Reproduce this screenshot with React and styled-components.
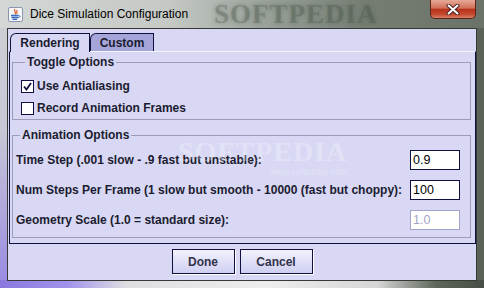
import React from 'react';
import styled, { createGlobalStyle } from 'styled-components';

const GlobalStyle = createGlobalStyle`
  html, body {
    margin: 0;
    padding: 0;
    background: #fff;
  }
  body {
    font-family: 'Liberation Sans', Arial, sans-serif;
  }
`;

const Window = styled.div`
  width: 484px;
  height: 288px;
  box-sizing: border-box;
  display: flex;
  flex-direction: column;
  background:
    linear-gradient(90deg, #8a78de 0%, #a292ea 14%, #dedee2 26%, #ededed 55%, #d6d6d6 78%, #5e665a 90%, #474e45 100%) bottom / 100% 8px no-repeat,
    linear-gradient(180deg, #cdd1d4 0%, #c6c6d6 45%, #9a88e2 100%) left / 7px 100% no-repeat,
    linear-gradient(90deg, #c9cdd0 0%, #b4b9b4 40%, #7f877d 60%, #5a6258 100%);
`;

const TitleBar = styled.div`
  height: 28px;
  flex: none;
  display: flex;
  align-items: center;
  padding-left: 8px;
  background: linear-gradient(90deg, #d3d7d5 0%, #c5c9c5 35%, #9aa29a 55%, #767e74 75%, #6b7369 100%);
`;

const TitleText = styled.span`
  margin-left: 7px;
  font-family: 'Liberation Sans', Arial, sans-serif;
  font-size: 12px;
  color: #000;
  white-space: nowrap;
`;

const Watermark = styled.span`
  margin-left: 26px;
  font-family: 'Liberation Serif', 'Times New Roman', serif;
  font-weight: bold;
  font-size: 27px;
  line-height: 28px;
  letter-spacing: 1px;
  color: rgba(72, 84, 72, 0.3);
  text-shadow: 0 0 4px rgba(72, 84, 72, 0.45);
  white-space: nowrap;
`;

const CloseButton = styled.div`
  margin-left: auto;
  margin-right: 8px;
  align-self: flex-start;
  width: 46px;
  height: 19px;
  box-sizing: border-box;
  border: 1px solid #5a2418;
  border-top: none;
  border-radius: 0 0 5px 5px;
  background: linear-gradient(180deg, #e6a896 0%, #d0705a 45%, #b8321a 52%, #c44a30 80%, #d88068 100%);
  display: flex;
  align-items: center;
  justify-content: center;
`;

const Body = styled.div`
  flex: 1;
  display: flex;
  padding: 0 7px 7px 7px;
  min-height: 0;
`;

const Client = styled.div`
  flex: 1;
  display: flex;
  flex-direction: column;
  border: 1px solid #363a36;
  background: #d8d8f4;
  padding-top: 4px;
`;

const TabRow = styled.div`
  display: flex;
  padding-left: 2px;
  height: 18px;
  position: relative;
  z-index: 1;
`;

const Tab = styled.div`
  width: ${({ $w }) => $w}px;
  height: ${({ $active }) => ($active ? 19 : 18)}px;
  box-sizing: border-box;
  border: 1px solid #101040;
  border-bottom: none;
  border-top-left-radius: 6px;
  background: ${({ $active }) => ($active ? '#d8d8f4' : '#a5a5d9')};
  font-weight: bold;
  font-size: 12px;
  color: #1c1c30;
  display: flex;
  align-items: center;
  justify-content: center;
  padding-bottom: ${({ $active }) => ($active ? 1 : 0)}px;
`;

const Pane = styled.div`
  position: relative;
  margin-left: 1px;
  border: 1px solid #101040;
  border-top-color: #f4f4ff;
  padding: 3px 4px 5px 2px;
`;

const Group = styled.fieldset`
  margin: ${({ $top }) => $top}px 0 0 0;
  padding: ${({ $pad }) => $pad};
  border: 1px solid #9c9cb8;
  min-width: 0;
`;

const Legend = styled.legend`
  margin-left: 4px;
  padding: 0 2px;
  font-weight: bold;
  font-size: 12px;
  line-height: 14px;
  color: #1c1c30;
`;

const CheckRow = styled.label`
  height: 22px;
  display: flex;
  align-items: center;
  gap: 3px;
  font-weight: bold;
  font-size: 12px;
  color: #1c1c30;
`;

const Box = styled.span`
  width: 13px;
  height: 13px;
  box-sizing: border-box;
  border: 1px solid #101040;
  background: #fff;
  display: flex;
  align-items: center;
  justify-content: center;
`;

const FieldRow = styled.div`
  height: 30px;
  display: flex;
  align-items: center;
  justify-content: space-between;
  font-weight: bold;
  font-size: 12px;
  color: #1c1c30;
`;

const Field = styled.input`
  width: 50px;
  height: 20px;
  box-sizing: border-box;
  margin: 0;
  border: 1px solid ${({ disabled }) => (disabled ? '#a4a4cc' : '#101040')};
  background: #fff;
  padding: 0 2px;
  font-family: 'Liberation Sans', Arial, sans-serif;
  font-size: 12.5px;
  color: ${({ disabled }) => (disabled ? '#a4a4c4' : '#000')};
  outline: none;
`;

const ButtonBar = styled.div`
  display: flex;
  justify-content: center;
  gap: 5px;
  padding-top: 5px;
`;

const Button = styled.button`
  width: ${({ $w }) => $w}px;
  height: 25px;
  box-sizing: border-box;
  margin: 0;
  border: 1px solid #101040;
  box-shadow: 1px 1px 0 #fff;
  background: linear-gradient(180deg, #f2f2fc 0%, #e2e2f8 45%, #cfcff2 100%);
  font-family: 'Liberation Sans', Arial, sans-serif;
  font-weight: bold;
  font-size: 12px;
  color: #33334a;
  padding: 0;
`;

const PaneMark = styled.div`
  position: absolute;
  left: 168px;
  top: 86px;
  font-family: 'Liberation Serif', serif;
  font-weight: bold;
  font-size: 28px;
  letter-spacing: 1px;
  color: rgba(255, 255, 255, 0.28);
  pointer-events: none;
  line-height: 1;
`;

const PaneMarkSmall = styled.div`
  font-family: 'Liberation Sans', Arial, sans-serif;
  font-weight: normal;
  font-size: 9px;
  letter-spacing: 0;
  text-align: right;
  margin-top: 2px;
`;

const JavaIcon = () => (
  <svg width="15" height="15" viewBox="0 0 15 15">
    <rect x="0.5" y="0.5" width="14" height="14" rx="1.5" fill="#f4f6fa" stroke="#8a96b0" />
    <path d="M7 2 C5 4 9 5 7 7.5 M9 3 C8 4.5 10 5 8.5 7" stroke="#e05a20" strokeWidth="1.2" fill="none" />
    <path d="M3 8.5 H10.5 M3.5 10.5 H10 M4.5 12.3 H9" stroke="#3a6cc0" strokeWidth="1.3" />
    <path d="M10.5 8.5 C12.5 8.5 12.5 10.5 10 10.5" stroke="#3a6cc0" strokeWidth="1" fill="none" />
  </svg>
);

const CloseGlyph = () => (
  <svg width="14" height="11" viewBox="0 0 14 11">
    <path d="M2.5 1.5 L11.5 9.5 M11.5 1.5 L2.5 9.5" stroke="#4a2020" strokeWidth="4" strokeLinecap="round" />
    <path d="M2.5 1.5 L11.5 9.5 M11.5 1.5 L2.5 9.5" stroke="#fff" strokeWidth="2" strokeLinecap="round" />
  </svg>
);

const Check = () => (
  <svg width="9" height="9" viewBox="0 0 9 9">
    <path d="M1 4.5 L3.5 7.5 L8 1" stroke="#101040" strokeWidth="1.8" fill="none" />
  </svg>
);

const CheckOption = ({ checked, children }) => (
  <CheckRow>
    <Box>{checked && <Check />}</Box>
    {children}
  </CheckRow>
);

const fields = [
  { label: 'Time Step (.001 slow - .9 fast but unstable):', value: '0.9' },
  { label: 'Num Steps Per Frame (1 slow but smooth - 10000 (fast but choppy):', value: '100' },
  { label: 'Geometry Scale (1.0 = standard size):', value: '1.0', disabled: true },
];

const App = () => (
  <>
    <GlobalStyle />
    <Window>
      <TitleBar>
        <JavaIcon />
        <TitleText>Dice Simulation Configuration</TitleText>
        <Watermark>SOFTPEDIA</Watermark>
        <CloseButton>
          <CloseGlyph />
        </CloseButton>
      </TitleBar>
      <Body>
        <Client>
          <TabRow>
            <Tab $w={80} $active>Rendering</Tab>
            <Tab $w={64}>Custom</Tab>
          </TabRow>
          <Pane>
            <Group $top={0} $pad="6px 0 0 8px">
              <Legend>Toggle Options</Legend>
              <CheckOption checked>Use Antialiasing</CheckOption>
              <CheckOption>Record Animation Frames</CheckOption>
            </Group>
            <Group $top={8} $pad="3px 10px 2px 3px">
              <Legend>Animation Options</Legend>
              {fields.map((f) => (
                <FieldRow key={f.label}>
                  <span>{f.label}</span>
                  <Field defaultValue={f.value} disabled={f.disabled} />
                </FieldRow>
              ))}
            </Group>
            <PaneMark>
              SOFTPEDIA
              <PaneMarkSmall>www.softpedia.com</PaneMarkSmall>
            </PaneMark>
          </Pane>
          <ButtonBar>
            <Button $w={63}>Done</Button>
            <Button $w={73}>Cancel</Button>
          </ButtonBar>
        </Client>
      </Body>
    </Window>
  </>
);

export default App;
